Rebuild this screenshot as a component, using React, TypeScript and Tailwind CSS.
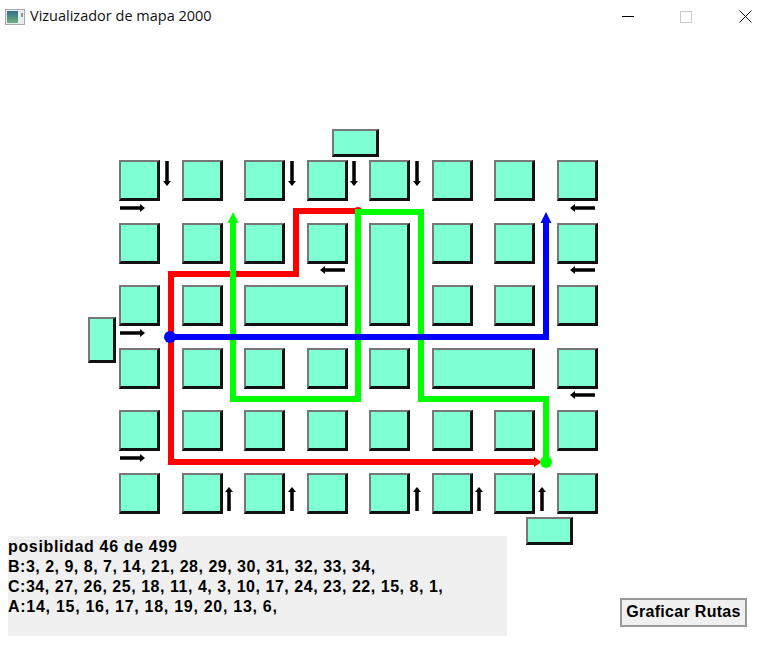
const blocks = [
  'col-start-1 row-start-1', 'col-start-2 row-start-1', 'col-start-3 row-start-1', 'col-start-4 row-start-1',
  'col-start-5 row-start-1', 'col-start-6 row-start-1', 'col-start-7 row-start-1', 'col-start-8 row-start-1',
  'col-start-1 row-start-2', 'col-start-2 row-start-2', 'col-start-3 row-start-2', 'col-start-4 row-start-2',
  'col-start-5 row-start-2 row-span-2', 'col-start-6 row-start-2', 'col-start-7 row-start-2', 'col-start-8 row-start-2',
  'col-start-1 row-start-3', 'col-start-2 row-start-3', 'col-start-3 col-span-2 row-start-3',
  'col-start-6 row-start-3', 'col-start-7 row-start-3', 'col-start-8 row-start-3',
  'col-start-1 row-start-4', 'col-start-2 row-start-4', 'col-start-3 row-start-4', 'col-start-4 row-start-4',
  'col-start-5 row-start-4', 'col-start-6 col-span-2 row-start-4', 'col-start-8 row-start-4',
  'col-start-1 row-start-5', 'col-start-2 row-start-5', 'col-start-3 row-start-5', 'col-start-4 row-start-5',
  'col-start-5 row-start-5', 'col-start-6 row-start-5', 'col-start-7 row-start-5', 'col-start-8 row-start-5',
  'col-start-1 row-start-6', 'col-start-2 row-start-6', 'col-start-3 row-start-6', 'col-start-4 row-start-6',
  'col-start-5 row-start-6', 'col-start-6 row-start-6', 'col-start-7 row-start-6', 'col-start-8 row-start-6',
]

const blockStyle = 'border-t-2 border-l-2 border-r-[3px] border-b-[3px] border-t-[#777] border-l-[#777] border-r-[#111] border-b-[#111] bg-[#7fffd4]'

// x, y of the tail, dx/dy pointing along the travel direction
const arrows: [number, number, number, number][] = [
  [167, 161, 0, 25], [292, 161, 0, 25], [354, 161, 0, 25], [417, 161, 0, 25],
  [120, 208, 25, 0], [120, 333, 25, 0], [120, 458, 25, 0],
  [345, 270, -25, 0], [595, 208, -25, 0], [595, 270, -25, 0], [595, 395, -25, 0],
  [229, 511, 0, -24], [292, 511, 0, -24], [417, 511, 0, -24], [479, 511, 0, -24], [542, 511, 0, -24],
]

function SmallArrow({ x, y, dx, dy }: { x: number; y: number; dx: number; dy: number }) {
  const ux = Math.sign(dx)
  const uy = Math.sign(dy)
  const ex = x + dx
  const ey = y + dy
  const bx = ex - ux * 5
  const by = ey - uy * 5
  return (
    <g>
      <line x1={x} y1={y} x2={bx} y2={by} stroke="#000" strokeWidth={3.5} />
      <polygon points={`${ex},${ey} ${bx + uy * 4},${by + ux * 4} ${bx - uy * 4},${by - ux * 4}`} fill="#000" />
    </g>
  )
}

function MapOverlay() {
  return (
    <svg className="pointer-events-none absolute left-0 top-0" width={767} height={613} viewBox="0 33 767 613">
      {arrows.map(([x, y, dx, dy], i) => (
        <SmallArrow key={i} x={x} y={y} dx={dx} dy={dy} />
      ))}
      {/* A */}
      <circle cx={358} cy={211} r={4} fill="#ff0000" />
      <polyline points="358,211 296,211 296,274 171,274 171,462 536,462" fill="none" stroke="#ff0000" strokeWidth={6} />
      <polygon points="542,462 534,457 534,467" fill="#ff0000" />
      {/* C */}
      <polyline points="546,462 546,399 421,399 421,212 358,212 358,399 233,399 233,221" fill="none" stroke="#00ff00" strokeWidth={6} />
      <polygon points="233,212 227.500,223 238.500,223" fill="#00ff00" />
      <circle cx={546} cy={462} r={6} fill="#00ff00" />
      {/* B */}
      <polyline points="170,337 546,337 546,221" fill="none" stroke="#0000ff" strokeWidth={6} />
      <polygon points="546,212 540.500,223 551.500,223" fill="#0000ff" />
      <circle cx={170} cy={337} r={6} fill="#0000ff" />
    </svg>
  )
}

export default function App() {
  return (
    <div className="flex h-[646px] w-[767px] flex-col overflow-hidden bg-white font-['Liberation_Sans',sans-serif] text-black">
      <div className="flex h-[33px] items-center pl-[5px]">
        <svg width="20" height="16" viewBox="0 0 20 16">
          <rect x="0.500" y="0.500" width="19" height="15" fill="#e8ecec" stroke="#a8a8a8" />
          <defs>
            <linearGradient id="ico" x1="0" y1="0" x2="0" y2="1">
              <stop offset="0" stopColor="#2f6d8f" />
              <stop offset="1" stopColor="#6fb27a" />
            </linearGradient>
          </defs>
          <rect x="2" y="2" width="11" height="12" fill="url(#ico)" />
          <rect x="16" y="4" width="2" height="4" fill="#7f9f9f" />
        </svg>
        <span className="ml-[5px] font-['Open_Sans',sans-serif] text-[14.500px] leading-none text-[#111]">Vizualizador de mapa 2000</span>
        <div className="ml-auto flex items-center">
          <div className="h-px w-[12px] bg-black" />
          <div className="ml-[46px] h-[12px] w-[12px] border border-[#ccc]" />
          <svg className="ml-[47px] mr-[15px]" width="13" height="13" viewBox="0 0 13 13">
            <path d="M0.500 0.500 L12.500 12.500 M12.500 0.500 L0.500 12.500" stroke="#111" fill="none" />
          </svg>
        </div>
      </div>

      <div className="pl-[119px] pt-[127px]">
        <div className="grid w-fit grid-cols-[repeat(8,41px)] grid-rows-[repeat(6,41px)] gap-x-[21.5px] gap-y-[21.5px]">
          {blocks.map((cls) => (
            <div key={cls} className={`${cls} ${blockStyle}`} />
          ))}
        </div>
      </div>

      {/* entry points around the grid */}
      <div className={`absolute left-[332px] top-[129px] h-[28px] w-[47px] ${blockStyle}`} />
      <div className={`absolute left-[88px] top-[317px] h-[46px] w-[28px] ${blockStyle}`} />
      <div className={`absolute left-[526px] top-[517px] h-[28px] w-[47px] ${blockStyle}`} />

      <div className="absolute left-0 top-[33px] h-[613px] w-[767px]">
        <MapOverlay />
      </div>

      <div className="mt-[22px] flex items-start pl-[8px]">
        <div className="h-[100px] w-[499px] bg-[#f0f0f0] text-[16px] font-bold leading-[20px] tracking-[0.5px]">
          <p className="pt-[1px] tracking-[0.65px]">posiblidad 46 de 499</p>
          <p>B:3, 2, 9, 8, 7, 14, 21, 28, 29, 30, 31, 32, 33, 34,</p>
          <p className="tracking-[0.53px]">C:34, 27, 26, 25, 18, 11, 4, 3, 10, 17, 24, 23, 22, 15, 8, 1,</p>
          <p className="tracking-[0.72px]">A:14, 15, 16, 17, 18, 19, 20, 13, 6,</p>
        </div>
        <button
          type="button"
          className="ml-[113px] mt-[62px] h-[29px] w-[127px] border-2 border-[#999] bg-[#f0f0f0] text-[16px] font-bold leading-none tracking-[0.3px]"
        >
          Graficar Rutas
        </button>
      </div>
    </div>
  )
}
